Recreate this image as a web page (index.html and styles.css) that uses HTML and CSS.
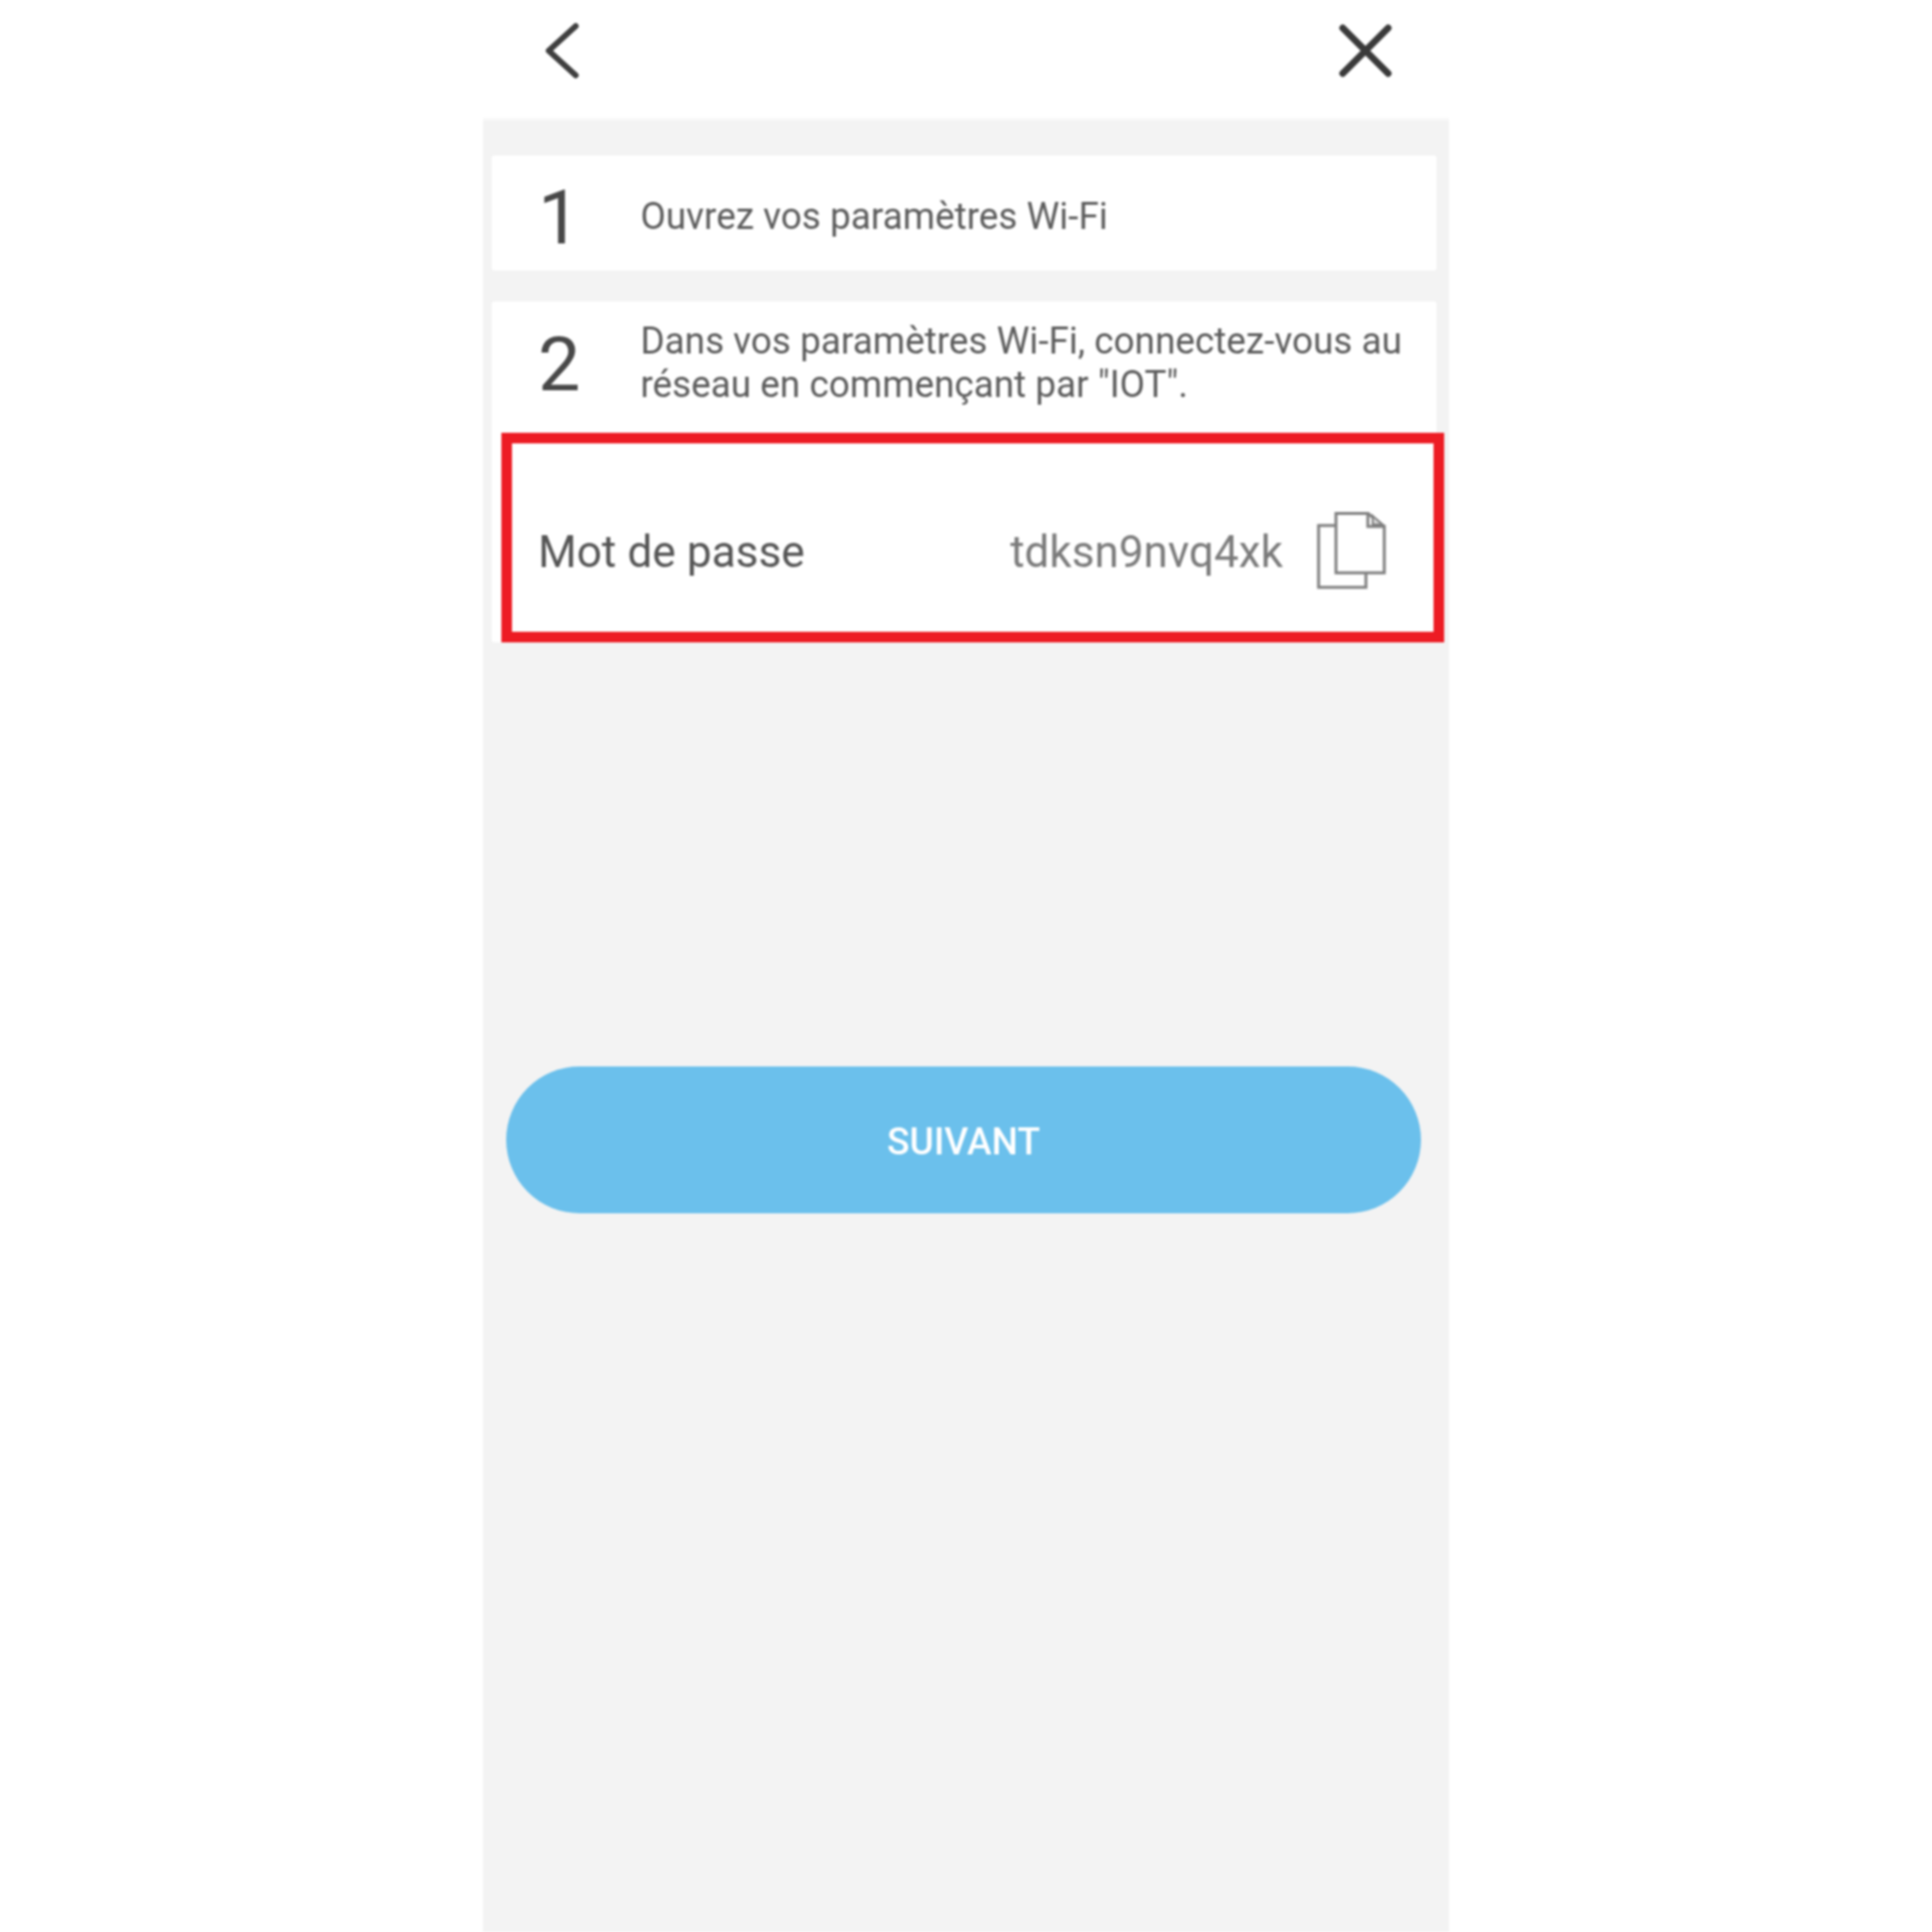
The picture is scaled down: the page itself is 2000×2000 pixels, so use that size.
FILE: index.html
```html
<!DOCTYPE html>
<html lang="fr">
<head>
<meta charset="utf-8">
<title>Connexion Wi-Fi</title>
<link rel="stylesheet" href="styles.css">
</head>
<body>
<main class="phone">
  <header class="topbar">
    <svg class="icon-back" viewBox="0 0 40 64" aria-hidden="true"><path d="M34 6 L6 31.500 L34 57"/></svg>
    <svg class="icon-close" viewBox="0 0 60 64" aria-hidden="true"><path d="M6 8 L53 55 M53 8 L6 55"/></svg>
  </header>
  <section class="content">
    <div class="card step-one">
      <span class="num">1</span>
      <p class="text">Ouvrez vos paramètres Wi-Fi</p>
    </div>
    <div class="card step-two">
      <div class="step-head">
        <span class="num">2</span>
        <p class="text">Dans vos paramètres Wi-Fi, connectez-vous au réseau en commençant par "IOT".</p>
      </div>
      <div class="password">
        <span class="pw-label">Mot de passe</span>
        <span class="pw-value">tdksn9nvq4xk</span>
        <svg class="icon-copy" viewBox="0 0 72 82" aria-hidden="true">
          <path d="M20 14 H2 V78 H51 V64"/>
          <path d="M20 1.500 H53 V15 H70 V63 H20 Z"/>
          <path d="M53 1.500 L70 15"/>
          <path class="fold" d="M58 4 L68 13 H58 Z"/>
        </svg>
      </div>
      <div class="highlight"></div>
    </div>
    <button class="next" type="button">SUIVANT</button>
  </section>
</main>
</body>
</html>
```
FILE: styles.css
```css
* { box-sizing: border-box; }
html, body { margin: 0; padding: 0; background: #fff; }
body { font-family: Roboto, "Liberation Sans", sans-serif; }

.phone {
  width: 1000px;
  height: 2000px;
  margin: 0 auto;
  display: flex;
  flex-direction: column;
  filter: blur(1px);
}

.topbar {
  height: 125px;
  flex: none;
  display: flex;
  justify-content: space-between;
  align-items: flex-start;
  padding: 21px 56px 0 62px;
  background: #fff;
  border-bottom: 3px solid #f8f8f8;
}
.icon-back { width: 40px; height: 64px; }
.icon-back path { fill: none; stroke: #3f3f3f; stroke-width: 6; stroke-linecap: round; stroke-linejoin: round; }
.icon-close { width: 60px; height: 64px; }
.icon-close path { fill: none; stroke: #3a3a3a; stroke-width: 7; stroke-linecap: round; }

.content {
  flex: 1;
  background: #f3f3f3;
  padding: 36px 13px 0 9px;
  display: flex;
  flex-direction: column;
}

.card { background: #fff; border-radius: 3px; }
.step-one {
  height: 119px;
  display: flex;
  align-items: center;
  padding: 7px 0 0 48px;
  margin-bottom: 32px;
}
.step-two { position: relative; height: 353px; }
.step-head {
  display: flex;
  align-items: center;
  padding: 12px 30px 0 48px;
}
.num {
  flex: none;
  width: 106px;
  margin-top: 4px;
  font-size: 78px;
  font-weight: 400;
  line-height: 100px;
  color: #484848;
}
.text {
  margin: 0;
  font-size: 38.2px;
  line-height: 45px;
  color: #5c5c5c;
}
.password {
  display: flex;
  align-items: center;
  margin-top: 103px;
  padding: 0 52px 0 48px;
  height: 80px;
}
.pw-label { font-size: 45.800px; color: #555; flex: 1; }
.pw-value { font-size: 45.600px; color: #7b7b7b; }
.icon-copy { width: 72px; height: 82px; margin-left: 35px; flex: none; }
.icon-copy path { fill: none; stroke: #808080; stroke-width: 3; }
.icon-copy .fold { fill: #d6d6d6; stroke-width: 2; }

.highlight {
  position: absolute;
  left: 10px;
  top: 136px;
  width: 976px;
  height: 217px;
  border: 11px solid #ed1c24;
  pointer-events: none;
}

.next {
  margin: 439px 0 0 15px;
  padding-top: 3px;
  width: 947px;
  height: 152px;
  border: 0;
  border-radius: 76px;
  background: #6bc0ec;
  color: #fff;
  font-family: inherit;
  font-size: 38.5px;
  font-weight: 500;
}
```
